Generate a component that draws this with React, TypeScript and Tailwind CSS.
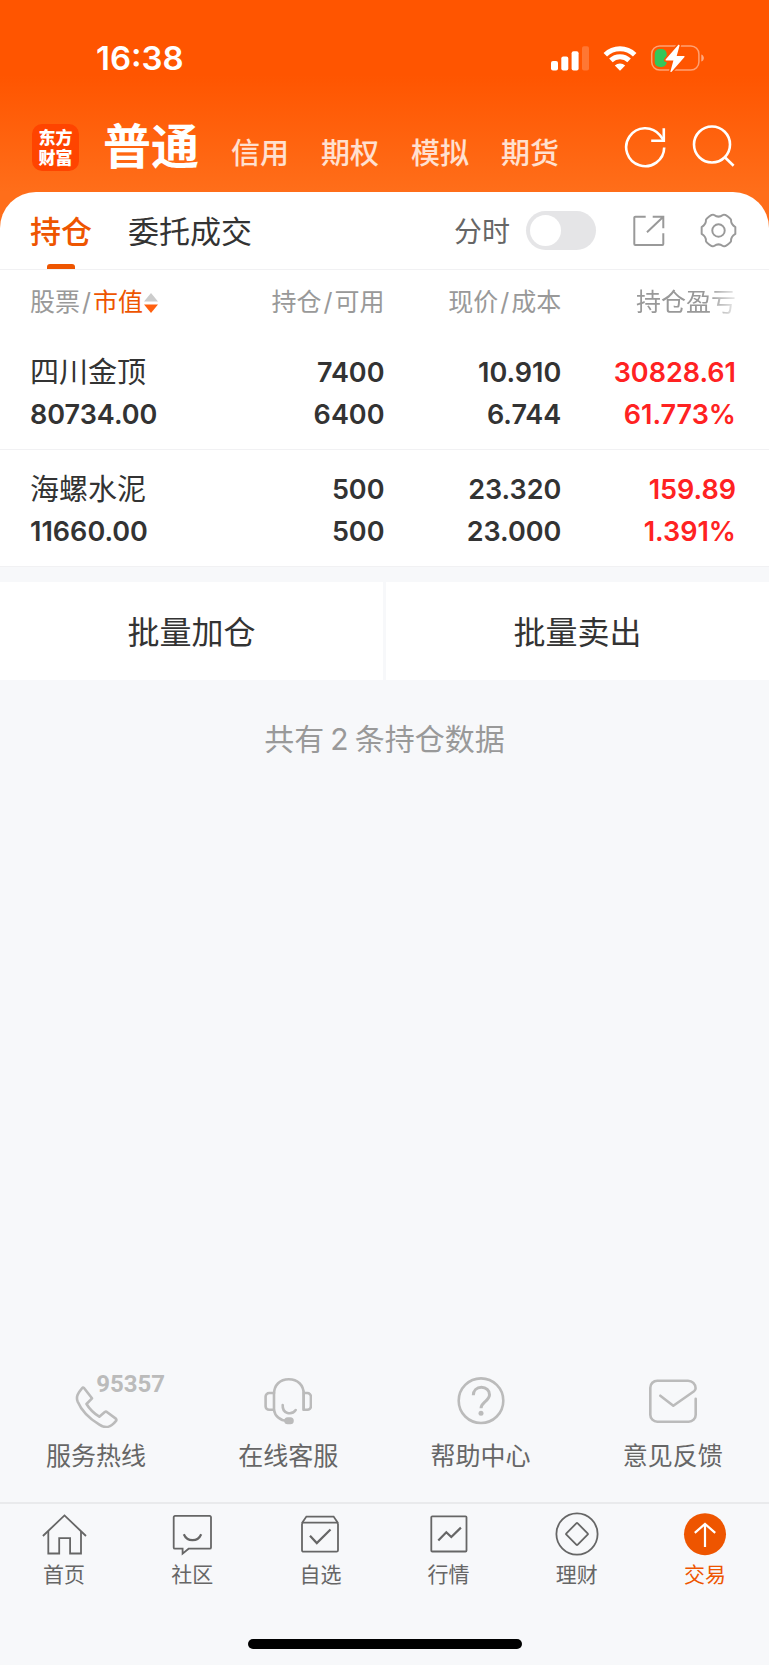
import type { ReactNode } from 'react';

const accounts = ['信用', '期权', '模拟', '期货'];

const positions = [
  { name: '四川金顶', value: '80734.00', held: '7400', usable: '6400', price: '10.910', cost: '6.744', profit: '30828.61', rate: '61.773%' },
  { name: '海螺水泥', value: '11660.00', held: '500', usable: '500', price: '23.320', cost: '23.000', profit: '159.89', rate: '1.391%' },
];

function StatusBar() {
  return (
    <div className="flex h-9 items-center justify-between pl-24 pr-[63px] text-white">
      <span className="text-[33px] font-semibold leading-9">16:38</span>
      <div className="flex items-center gap-3">
        <svg width="40" height="30" viewBox="0 0 40 30" fill="currentColor" aria-hidden="true">
          <rect x="1" y="18" width="7" height="9.5" rx="2" />
          <rect x="11.3" y="13.5" width="7" height="14" rx="2" />
          <rect x="21.6" y="8.3" width="7" height="19.2" rx="2" />
          <rect x="32" y="3.3" width="7" height="24.2" rx="2" opacity="0.2" />
        </svg>
        <svg width="36" height="30" viewBox="0 0 36 30" fill="none" stroke="currentColor" strokeWidth="5" aria-hidden="true">
          <path d="M3.3 11.7a21 21 0 0 1 29.4 0" />
          <path d="M8.9 17.4a13 13 0 0 1 18.2 0" />
          <path d="M18 27.8l-5.2-5.2a7.6 7.6 0 0 1 10.4 0z" fill="currentColor" stroke="none" />
        </svg>
        <svg width="56" height="30" viewBox="0 0 56 30" aria-hidden="true">
          <rect x="1.7" y="2.9" width="47.2" height="24.2" rx="8" fill="none" stroke="#fff" strokeOpacity="0.45" strokeWidth="1.5" />
          <path d="M51.3 11.5c3.4 1 3.4 6 0 7z" fill="#fff" fillOpacity="0.5" />
          <rect x="4.7" y="6" width="12" height="18" rx="5" fill="#34c759" />
          <path
            d="M28.4 1.8L15.6 16.4q-.6 1.1.6 1.1h7.2l-3 10.9q.2 1.2 1.2.3l12.9-14.6q.5-1.2-.7-1.2h-7.1l2.9-10.4q-.2-1.2-1.2-.7z"
            fill="#fff"
            stroke="#ff5500"
            strokeWidth="3"
            paintOrder="stroke"
          />
        </svg>
      </div>
    </div>
  );
}

function AccountBar() {
  return (
    <div className="mt-10 flex h-[62px] items-center pl-8 pr-[34px] text-white">
      <a
        href="#"
        className="flex h-[47px] w-[47px] items-center justify-center rounded-[10px] bg-[#ff4400] text-center font-['Noto_Sans_CJK_SC',sans-serif] text-[17px] font-black leading-5"
      >
        <span>
          东方
          <br />
          财富
        </span>
      </a>
      <nav className="ml-6 flex flex-1 items-baseline gap-8" aria-label="账户类型">
        <a href="#" className="text-[48px] font-bold leading-[62px]" aria-current="page">
          普通
        </a>
        {accounts.map((name) => (
          <a key={name} href="#" className="text-[29px] font-medium text-white/80">
            {name}
          </a>
        ))}
      </nav>
      <div className="flex items-center gap-6">
        <button type="button" aria-label="刷新">
          <svg width="44" height="44" viewBox="0 0 44 44" fill="none" stroke="currentColor" strokeWidth="2.6">
            <path d="M41.2 22.5a19 19 0 1 1-4.2-12.2l3.6 5" />
            <path d="M40.8 3.2v12.6H28.2" />
          </svg>
        </button>
        <button type="button" aria-label="搜索">
          <svg width="44" height="44" viewBox="0 0 44 44" fill="none" stroke="currentColor" strokeWidth="2.6">
            <circle cx="21" cy="19.5" r="18" />
            <path d="M33.6 32l9 8.8" />
          </svg>
        </button>
      </div>
    </div>
  );
}

function TabBar() {
  return (
    <div className="flex h-[78px] items-center justify-between border-b border-[#f1f1f3] pl-[30px] pr-8">
      <div className="flex h-full gap-9 text-[31px]">
        <button type="button" className="relative pt-1 font-medium text-[#ee5500]">
          持仓
          <span className="absolute bottom-0 left-1/2 h-[5px] w-7 -translate-x-1/2 rounded-t-[3px] bg-[#ee5500]" />
        </button>
        <button type="button" className="pt-1 text-[#333333]">
          委托成交
        </button>
      </div>
      <div className="flex items-center text-[#999999]">
        <label htmlFor="timeline" className="pt-[2px] text-[28px] text-[#666666]">
          分时
        </label>
        <input
          id="timeline"
          type="checkbox"
          role="switch"
          className="ml-4 h-[39px] w-[70px] appearance-none rounded-full bg-[#e5e5e7] before:m-1 before:block before:h-[31px] before:w-[31px] before:rounded-full before:bg-white checked:bg-[#ee5500] checked:before:ml-[35px]"
        />
        <button type="button" aria-label="分享" className="ml-9">
          <svg width="34" height="34" viewBox="0 0 34 34" fill="none" stroke="currentColor" strokeWidth="2">
            <path d="M13.7 2.7H3.3a1 1 0 0 0-1 1V30a1 1 0 0 0 1 1h27a1 1 0 0 0 1-1V19.3" />
            <path d="M15 18.3L31.3 2.7M20.7 2.7h10.6v11.6" />
          </svg>
        </button>
        <button type="button" aria-label="设置" className="ml-[34px]">
          <svg width="37" height="37" viewBox="0 0 38 38" fill="none" stroke="currentColor" strokeWidth="2" strokeLinejoin="round">
            <path d="M36.3 15.500v7Q31.500 25.500 31.900 29.800 31 32 26 35Q24.200 35.500 23.500 35 19 31.500 14.500 35 13.800 35.500 12 35 7 32 6.100 29.800 6.500 25.500 1.700 22.500v-7Q6.500 12.500 6.100 8.200 7 6 12 3 13.800 2.500 14.500 3 19 6.500 23.500 3 24.200 2.500 26 3 31 6 31.900 8.200 31.500 12.500 36.300 15.500z" />
            <circle cx="19" cy="19" r="6.400" />
          </svg>
        </button>
      </div>
    </div>
  );
}

function Pair({ top, bottom }: { top: string; bottom: string }) {
  return (
    <td className="pb-[13px] pt-[19px] last:pr-[33px] last:text-[#ff2222]">
      <div>{top}</div>
      <div>{bottom}</div>
    </td>
  );
}

function Positions() {
  return (
    <table className="w-full table-fixed border-collapse text-right">
      <thead>
        <tr className="h-[63px] text-[25px] text-[#999999]">
          <th className="w-[27%] pl-[30px] pt-[2px] text-left font-normal">
            <button type="button" className="flex items-center whitespace-nowrap">
              股票<span className="px-[2px]">/</span>
              <span className="text-[#ee5500]">市值</span>
              <svg width="16" height="24" viewBox="0 0 16 24" aria-hidden="true">
                <path d="M8 2l7 8.5H1z" fill="#cccccc" />
                <path d="M8 22l7-8.5H1z" fill="#ff6010" />
              </svg>
            </button>
          </th>
          <th className="w-[23%] pt-[2px] font-normal">
            持仓<span className="px-[2px]">/</span>可用
          </th>
          <th className="w-[23%] pt-[2px] font-normal">
            现价<span className="px-[2px]">/</span>成本
          </th>
          <th className="pr-[33px] pt-[2px] font-normal">
            <span className="[mask-image:linear-gradient(to_left,#0003,#000_28px)]">持仓盈亏</span>
          </th>
        </tr>
      </thead>
      <tbody>
        {positions.map((p) => (
          <tr key={p.name} className="border-b border-[#f1f1f3] text-[27px] font-semibold leading-[42px] text-[#333333]">
            <td className="pb-[13px] pl-[30px] pt-[19px] text-left">
              <div className="text-[29px] font-normal">{p.name}</div>
              <div>{p.value}</div>
            </td>
            <Pair top={p.held} bottom={p.usable} />
            <Pair top={p.price} bottom={p.cost} />
            <Pair top={p.profit} bottom={p.rate} />
          </tr>
        ))}
      </tbody>
    </table>
  );
}

function Contact({ label, badge, children }: { label: string; badge?: string; children: ReactNode }) {
  return (
    <a href="#" className="flex flex-col items-center gap-3">
      <span className="relative text-[#bbbbbb]">
        <svg width="48" height="52" viewBox="0 0 48 52" fill="none" stroke="currentColor" strokeWidth="2.6" strokeLinecap="round" strokeLinejoin="round" aria-hidden="true">
          {children}
        </svg>
        {badge && (
          <span className="absolute -top-1 left-6 font-[Roboto,sans-serif] text-2xl font-bold leading-6">{badge}</span>
        )}
      </span>
      <span className="text-[25px] leading-8 text-[#666666]">{label}</span>
    </a>
  );
}

function Contacts() {
  return (
    <section className="grid grid-cols-4 pb-[30px]" aria-label="客户服务">
      <Contact label="服务热线" badge="95357">
        <path d="M11.8 11.8L20 22.3 14.5 28Q19 35.5 27.3 40.7L32.8 36Q34 35.2 35.2 36.2L43.8 42.6Q45 44 43.6 45.4C38.5 51.6 34 53 27.4 48.7 17.5 42.5 9 33.5 5.6 25.4 3.8 20.5 5.8 17.5 10 12.3Q11 11 11.8 11.8z" />
      </Contact>
      <Contact label="在线客服">
        <path d="M10 33.7V18C10 9 16 3.2 24.8 3.2S39.7 9 39.7 18v15.7" />
        <path d="M10 17H5.2a3.6 3.6 0 0 0-3.6 3.6v9.6a3.6 3.6 0 0 0 3.6 3.6H10c.8 6 6 11 13 11" />
        <path d="M39.7 17h3.6a3.6 3.6 0 0 1 3.6 3.6v9.6a3.6 3.6 0 0 1-3.6 3.6h-3.6z" />
        <path d="M18.7 29c-.6 9 9 10.5 13 5" />
        <rect x="21.5" y="42.5" width="7" height="4.5" rx="2.2" fill="currentColor" />
      </Contact>
      <Contact label="帮助中心">
        <circle cx="24" cy="24.7" r="22.3" />
        <path d="M16.3 19.3c0-4.8 3.4-8 8.1-8s8.1 3.2 8.1 7.4c0 3-1.9 4.7-4.3 6.9-2.7 2.4-4.2 3.6-4.2 6.7" strokeLinecap="butt" strokeWidth="3" />
        <circle cx="24" cy="37.2" r="2.5" fill="currentColor" stroke="none" />
      </Contact>
      <Contact label="意见反馈">
        <path d="M11.3 19.7l13 10L45 15.3q1.6-1.2 1.6-3a7.6 7.6 0 0 0-7.6-7.6H8.3a7 7 0 0 0-7 7v27a7 7 0 0 0 7 7h31.4a7 7 0 0 0 7-7V22.7" />
      </Contact>
    </section>
  );
}

function NavItem({ label, active, children }: { label: string; active?: boolean; children: ReactNode }) {
  return (
    <a
      href="#"
      aria-current={active ? 'page' : undefined}
      className={active ? 'flex flex-col items-center gap-1 text-[#ee5500]' : 'flex flex-col items-center gap-1 text-[#666666]'}
    >
      <svg width="44" height="44" viewBox="0 0 44 44" fill="none" stroke="currentColor" strokeWidth="1.8" className="overflow-visible" aria-hidden="true">
        {children}
      </svg>
      <span className="text-[21px] leading-7">{label}</span>
    </a>
  );
}

function BottomNav() {
  return (
    <footer className="border-t-2 border-[#e9eaec] pb-4 pt-[9px]">
      <nav className="grid grid-cols-6" aria-label="主导航">
        <NavItem label="首页">
          <path d="M.9 23L22.500 2.400 44 23" />
          <path d="M6.3 18v22.500h10.900V25.200h10.900v15.300H39V18" />
        </NavItem>
        <NavItem label="社区">
          <path d="M5 2.9h34.700a1.300 1.300 0 0 1 1.300 1.300v30.200a1.300 1.300 0 0 1-1.300 1.300H18.600l-6 4.900v-4.900H5a1.300 1.300 0 0 1-1.300-1.300V4.200A1.300 1.300 0 0 1 5 2.900z" />
          <path d="M13.8 21.200c3.500 8 14 8 17.400 0" strokeWidth="2.2" />
        </NavItem>
        <NavItem label="自选">
          <path d="M4 10l4.400-6.400h27.200L40 10" />
          <rect x="4" y="9.7" width="36" height="29" rx="1.5" />
          <path d="M12 22.800l6.800 7.300 13.700-13.600" strokeWidth="2.2" />
        </NavItem>
        <NavItem label="行情">
          <rect x="4.3" y="3.3" width="35.2" height="35.2" rx="1" />
          <path d="M11.3 27.500l8-8.200 5 4.700 9.600-9.400" strokeWidth="2.2" />
        </NavItem>
        <NavItem label="理财">
          <circle cx="22" cy="21" r="20.6" />
          <rect x="14" y="13" width="16" height="16" rx="1" transform="rotate(45 22 21)" />
        </NavItem>
        <NavItem label="交易" active>
          <circle cx="22" cy="21.2" r="21" fill="currentColor" stroke="none" />
          <path d="M22 34V11M11.800 19.800L22 10.900l10.200 8.900" stroke="#fff" strokeWidth="2.2" />
        </NavItem>
      </nav>
      <div className="mx-auto mt-[50px] h-[10px] w-[274px] rounded-full bg-black" />
    </footer>
  );
}

export default function App() {
  return (
    <div className="flex min-h-screen flex-col bg-[#f7f8fa] font-[Inter,'Noto_Sans_CJK_SC',sans-serif]" lang="zh-CN">
      <header className="bg-[linear-gradient(#ff5500_75px,#ff6e1a_192px)] pb-[54px] pt-10">
        <StatusBar />
        <AccountBar />
      </header>
      <main className="-mt-10 flex-1">
        <div className="rounded-t-[36px] bg-white">
          <TabBar />
          <Positions />
        </div>
        <div className="mt-[15px] grid grid-cols-2 gap-[3px] text-[32px] text-[#333333]">
          <button type="button" className="h-[98px] bg-white pt-1">
            批量加仓
          </button>
          <button type="button" className="h-[98px] bg-white pt-1">
            批量卖出
          </button>
        </div>
        <p className="mt-[39px] text-center text-[30px] leading-10 text-[#999999]">
          共有<span className="px-[6px]">2</span>条持仓数据
        </p>
      </main>
      <Contacts />
      <BottomNav />
    </div>
  );
}
